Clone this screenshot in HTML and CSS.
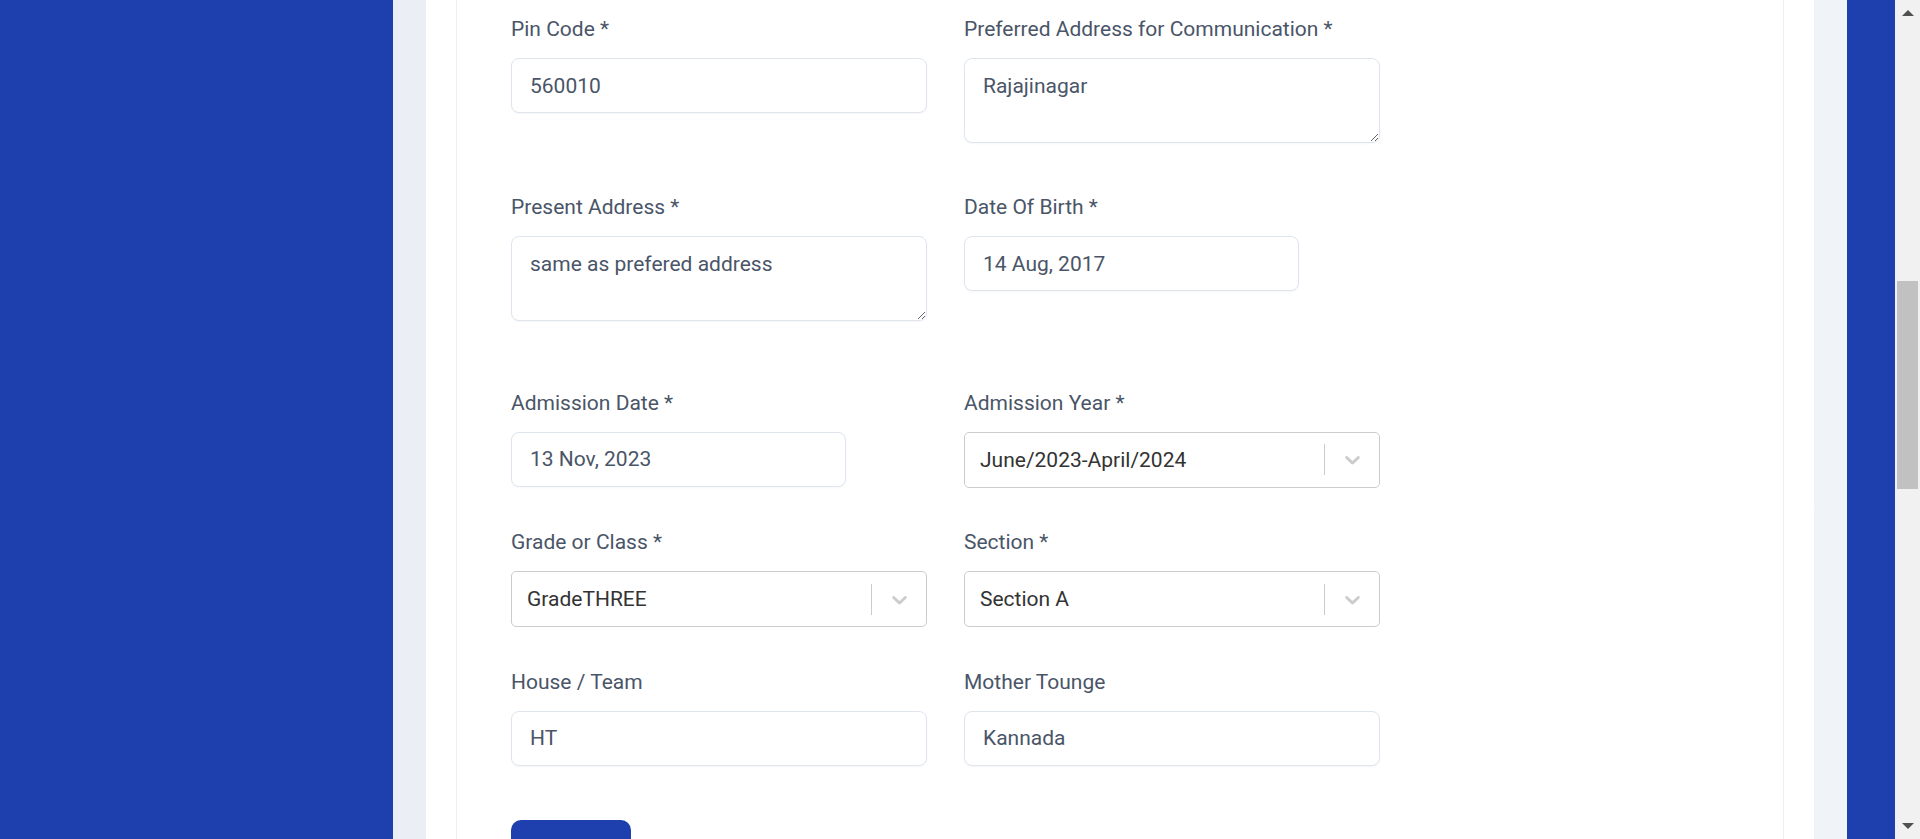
FILE: index.html
```html
<!DOCTYPE html>
<html lang="en">
<head>
<meta charset="utf-8">
<title>Student Form</title>
<link rel="stylesheet" href="styles.css">
</head>
<body>
<div class="layout">
  <aside class="sidebar"></aside>
  <main class="main">
    <section class="card">
      <div class="inner">
        <form class="form">
          <div class="row row--after-textarea">
            <div class="field">
              <label class="label">Pin Code *</label>
              <input class="input" type="text" value="560010">
            </div>
            <div class="field">
              <label class="label">Preferred Address for Communication *</label>
              <textarea class="input textarea">Rajajinagar</textarea>
            </div>
          </div>
          <div class="row row--spaced">
            <div class="field">
              <label class="label">Present Address *</label>
              <textarea class="input textarea">same as prefered address</textarea>
            </div>
            <div class="field">
              <label class="label">Date Of Birth *</label>
              <input class="input input--date" type="text" value="14 Aug, 2017">
            </div>
          </div>
          <div class="row">
            <div class="field">
              <label class="label">Admission Date *</label>
              <input class="input input--date" type="text" value="13 Nov, 2023">
            </div>
            <div class="field">
              <label class="label">Admission Year *</label>
              <div class="select">
                <div class="select__value">June/2023-April/2024</div>
                <span class="select__sep"></span>
                <div class="select__indicator">
                  <svg viewBox="0 0 20 20" width="25" height="25"><path d="M4.516 7.548c0.436-0.446 1.043-0.481 1.576 0l3.908 3.747 3.908-3.747c0.533-0.481 1.141-0.446 1.574 0 0.436 0.445 0.408 1.197 0 1.615-0.406 0.418-4.695 4.502-4.695 4.502-0.217 0.223-0.502 0.335-0.787 0.335s-0.57-0.112-0.789-0.335c0 0-4.287-4.084-4.695-4.502s-0.436-1.17 0-1.615z"/></svg>
                </div>
              </div>
            </div>
          </div>
          <div class="row">
            <div class="field">
              <label class="label">Grade or Class *</label>
              <div class="select">
                <div class="select__value">GradeTHREE</div>
                <span class="select__sep"></span>
                <div class="select__indicator">
                  <svg viewBox="0 0 20 20" width="25" height="25"><path d="M4.516 7.548c0.436-0.446 1.043-0.481 1.576 0l3.908 3.747 3.908-3.747c0.533-0.481 1.141-0.446 1.574 0 0.436 0.445 0.408 1.197 0 1.615-0.406 0.418-4.695 4.502-4.695 4.502-0.217 0.223-0.502 0.335-0.787 0.335s-0.57-0.112-0.789-0.335c0 0-4.287-4.084-4.695-4.502s-0.436-1.17 0-1.615z"/></svg>
                </div>
              </div>
            </div>
            <div class="field">
              <label class="label">Section *</label>
              <div class="select">
                <div class="select__value">Section A</div>
                <span class="select__sep"></span>
                <div class="select__indicator">
                  <svg viewBox="0 0 20 20" width="25" height="25"><path d="M4.516 7.548c0.436-0.446 1.043-0.481 1.576 0l3.908 3.747 3.908-3.747c0.533-0.481 1.141-0.446 1.574 0 0.436 0.445 0.408 1.197 0 1.615-0.406 0.418-4.695 4.502-4.695 4.502-0.217 0.223-0.502 0.335-0.787 0.335s-0.57-0.112-0.789-0.335c0 0-4.287-4.084-4.695-4.502s-0.436-1.17 0-1.615z"/></svg>
                </div>
              </div>
            </div>
          </div>
          <div class="row row--last">
            <div class="field">
              <label class="label">House / Team</label>
              <input class="input" type="text" value="HT">
            </div>
            <div class="field">
              <label class="label">Mother Tounge</label>
              <input class="input" type="text" value="Kannada">
            </div>
          </div>
          <button class="btn" type="button" aria-label="Save"></button>
        </form>
      </div>
    </section>
  </main>
  <div class="rail"></div>
  <div class="scrollbar">
    <div class="scrollbar__arrow scrollbar__arrow--up"></div>
    <div class="scrollbar__thumb"></div>
    <div class="scrollbar__track"></div>
    <div class="scrollbar__arrow scrollbar__arrow--down"></div>
  </div>
</div>
</body>
</html>
```

FILE: styles.css
```css
* { box-sizing: border-box; }

html, body {
  margin: 0;
  padding: 0;
  height: 839px;
  overflow: hidden;
  font-family: Roboto, "Noto Sans", sans-serif;
}

.layout {
  display: flex;
  height: 839px;
}

.sidebar {
  width: 393px;
  flex: none;
  background: #1e40af;
}

.main {
  flex: 1;
  display: flex;
  padding: 0 33px;
  background: linear-gradient(90deg, #ebeef4, #f0f3f8);
}

.card {
  flex: 1;
  background: #fff;
  padding: 0 30px;
  display: flex;
}

.inner {
  flex: 1;
  border-left: 1px solid #eeeff1;
  border-right: 1px solid #eeeff1;
  padding: 14px 0 0 54px;
}

.rail {
  width: 48px;
  flex: none;
  background: #1e40af;
}

.scrollbar {
  width: 25px;
  flex: none;
  background: #f1f1f1;
  display: flex;
  flex-direction: column;
  align-items: center;
}

.scrollbar__arrow {
  width: 0;
  height: 0;
  border-left: 6px solid transparent;
  border-right: 6px solid transparent;
}

.scrollbar__arrow--up {
  margin-top: 10px;
  border-bottom: 6px solid #505050;
}

.scrollbar__arrow--down {
  margin-bottom: 10px;
  border-top: 6px solid #505050;
}

.scrollbar__thumb {
  margin-top: 265px;
  width: 21px;
  height: 208px;
  background: #c1c1c1;
}

.scrollbar__track {
  flex: 1;
}

.form {
  display: flex;
  flex-direction: column;
  align-items: flex-start;
}

.row {
  display: flex;
  gap: 37px;
  margin-bottom: 39.5px;
}

.row--after-textarea { margin-bottom: 49px; }
.row--spaced { margin-bottom: 66.5px; }
.row--last { margin-bottom: 54.7px; }

.field {
  width: 416px;
  display: flex;
  flex-direction: column;
  align-items: flex-start;
}

.label {
  display: block;
  font-size: 21px;
  line-height: 30px;
  color: #4a5568;
  margin-bottom: 14px;
}

.input {
  display: block;
  width: 100%;
  height: 55px;
  margin: 0;
  padding: 11px 18px;
  font-family: Roboto, "Noto Sans", sans-serif;
  font-size: 21px;
  line-height: 30px;
  color: #4a5568;
  background: #fff;
  border: 1px solid #dfe5ef;
  border-radius: 8px;
  box-shadow: 0 1px 2px rgba(0, 0, 0, 0.04);
  outline: none;
}

.input--date { width: 335px; }

.textarea {
  height: 85px;
  padding-top: 12px;
  resize: vertical;
  overflow: hidden;
}

.select {
  width: 100%;
  height: 56px;
  display: flex;
  align-items: center;
  border: 1px solid #cccccc;
  border-radius: 5px;
  background: #fff;
}

.select__value {
  flex: 1;
  padding-left: 15px;
  font-size: 21px;
  color: #333333;
}

.select__sep {
  width: 1px;
  height: 31px;
  background: #cccccc;
}

.select__indicator {
  width: 54px;
  display: flex;
  justify-content: center;
  align-items: center;
}

.select__indicator svg {
  fill: #cccccc;
  display: block;
}

.btn {
  width: 120px;
  height: 50px;
  padding: 0;
  border: none;
  border-radius: 10px;
  background: #1e40af;
}
```
